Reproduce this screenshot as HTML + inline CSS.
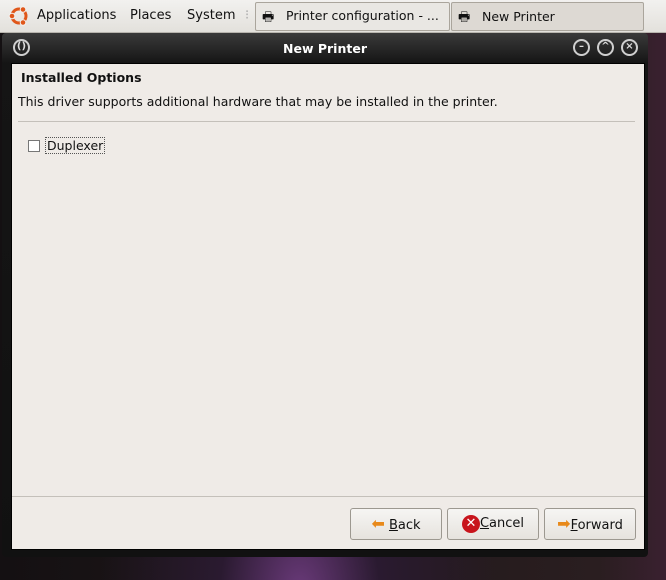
<!DOCTYPE html>
<html><head><style>
body{margin:0;width:666px;height:580px;overflow:hidden;background:#1a1418;font-family:"DejaVu Sans","Liberation Sans",sans-serif;font-size:12.5px;position:relative}
.panel{position:absolute;left:0;top:0;width:666px;height:32px;background:linear-gradient(#f2f1ef,#e3e1dc);border-bottom:1px solid #b8b5ae}
.panel span{position:absolute;top:8px;color:#111;font-size:13px;white-space:nowrap}
.task{position:absolute;top:2px;height:27px;border:1px solid #aaa59c;border-radius:2px;background:#e9e7e3}
.bg{position:absolute;left:0;top:33px;width:666px;height:547px;background:radial-gradient(ellipse at 300px 560px,#6a3a7a 0,#2a1a30 80px,transparent 200px),linear-gradient(90deg,#141012,#2a1e20 90%,#3a2030)}
.win{position:absolute;left:2px;top:33px;width:646px;height:524px;background:linear-gradient(#3a3a3a,#151515 30px,#111);border-radius:4px}
.title{position:absolute;left:0;top:8px;width:646px;text-align:center;color:#fff;font-weight:bold;font-size:12.5px}
.content{position:absolute;left:9px;top:30px;width:632px;height:485px;background:#efebe7;border:1px solid #000}
.btn{position:absolute;top:444px;height:30px;width:90px;border:1px solid #9c9890;border-radius:3px;background:linear-gradient(#f6f5f3,#e6e3de);font-size:13px;line-height:30px;text-align:center;color:#111}
.circ{position:absolute;top:6px;width:17px;height:17px;border:2px solid #cfcfcf;border-radius:50%;box-sizing:border-box;color:#ddd;font-size:10px;line-height:12px;text-align:center;font-weight:bold}
</style></head><body>
<div class="bg"></div>
<div class="panel">
 <svg style="position:absolute;left:8px;top:5px" width="22" height="22" viewBox="0 0 22 22"><circle cx="11" cy="11" r="7" fill="none" stroke="#e0571a" stroke-width="3"/><circle cx="4" cy="11" r="2.8" fill="#e0571a" stroke="#f2f1ef" stroke-width="1"/><circle cx="15" cy="4.5" r="2.8" fill="#e0571a" stroke="#f2f1ef" stroke-width="1"/><circle cx="15" cy="17.5" r="2.8" fill="#e0571a" stroke="#f2f1ef" stroke-width="1"/></svg>
 <span style="left:37px">Applications</span><span style="left:130px">Places</span><span style="left:187px">System</span>
 <span style="left:245px;color:#aaa">⁝</span>
 <div class="task" style="left:255px;width:193px"><span style="left:6px;top:5px">🖶</span><span style="left:30px;top:5px;font-size:12.5px">Printer configuration - ...</span></div>
 <div class="task" style="left:451px;width:191px;background:#ddd9d3"><span style="left:6px;top:5px">🖶</span><span style="left:30px;top:6px;font-size:12.5px">New Printer</span></div>
</div>
<div class="win">
 <div class="circ" style="left:11px">()</div>
 <div class="title">New Printer</div>
 <div class="circ" style="left:571px">–</div><div class="circ" style="left:595px">^</div><div class="circ" style="left:619px">×</div>
 <div class="content">
  <div style="position:absolute;left:9px;top:6px;font-weight:bold;color:#111">Installed Options</div>
  <div style="position:absolute;left:6px;top:30px;color:#111">This driver supports additional hardware that may be installed in the printer.</div>
  <div style="position:absolute;left:6px;top:57px;width:617px;border-top:1px solid #c4c0ba"></div>
  <div style="position:absolute;left:16px;top:76px;width:10px;height:10px;border:1px solid #777;background:#fff"></div>
  <div style="position:absolute;left:33px;top:73px;border:1px dotted #555;padding:0 1px;color:#111">Duplexer</div>
  <div style="position:absolute;left:0;top:432px;width:632px;border-top:1px solid #c4c0ba"></div>
  <div class="btn" style="left:338px"><span style="color:#e8891a;font-size:16px">⬅</span> <u>B</u>ack</div>
  <div class="btn" style="left:435px"><span style="display:inline-block;width:18px;height:18px;border-radius:50%;background:#c8141c;color:#fff;font-weight:bold;line-height:18px;vertical-align:middle">✕</span><u>C</u>ancel</div>
  <div class="btn" style="left:532px"><span style="color:#e8891a;font-size:16px">➡</span><u>F</u>orward</div>
 </div>
</div>
</body></html>
